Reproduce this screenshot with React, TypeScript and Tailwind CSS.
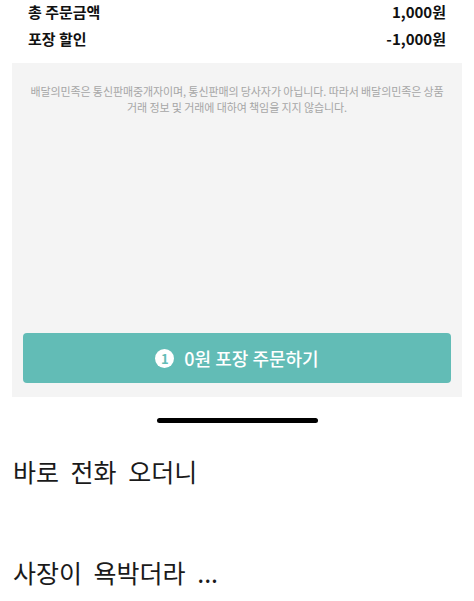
import React from "react";

export default function App() {
  const kr = { fontFamily: '"Noto Sans CJK KR", "Noto Sans", sans-serif' };
  return (
    <div className="w-[474px] h-[601px] bg-white overflow-hidden" style={kr}>
      <div className="px-[28px] pt-0">
        <div className="flex justify-between items-center h-[22px] text-[15px] font-bold text-[#111] leading-none">
          <span>총 주문금액</span>
          <span className="font-semibold">1,000원</span>
        </div>
        <div className="flex justify-between items-center h-[33px] text-[15px] font-bold text-[#111] leading-none">
          <span>포장 할인</span>
          <span className="font-semibold">-1,000원</span>
        </div>
      </div>
      <div className="mx-[12px] mt-[8px] h-[334px] bg-[#f4f4f4] flex flex-col">
        <div className="pt-[20px] px-[10px] text-center text-[11px] leading-[16px] text-[#a6a6a6] tracking-[-0.1px]">
          <p>배달의민족은 통신판매중개자이며, 통신판매의 당사자가 아닙니다. 따라서 배달의민족은 상품</p>
          <p>거래 정보 및 거래에 대하여 책임을 지지 않습니다.</p>
        </div>
        <div className="mt-auto mb-[14px] mx-[11px] h-[50px] rounded-[4px] bg-[#62bcb6] flex items-center justify-center gap-[10px]">
          <span className="w-[19px] h-[19px] rounded-full bg-white text-[#62bcb6] text-[13px] font-bold flex items-center justify-center leading-none">
            1
          </span>
          <span className="text-white text-[18px] font-medium leading-none">0원 포장 주문하기</span>
        </div>
      </div>
      <div className="flex justify-center mt-[21px]">
        <div className="w-[161px] h-[5px] rounded-full bg-black" />
      </div>
      <div className="pl-[13px] text-[#1a1a1a] text-[25px] leading-none">
        <p className="mt-[36px] [word-spacing:6px]">바로 전화 오더니</p>
        <p className="mt-[76px] [word-spacing:6px]">사장이 욕박더라 ...</p>
      </div>
    </div>
  );
}
